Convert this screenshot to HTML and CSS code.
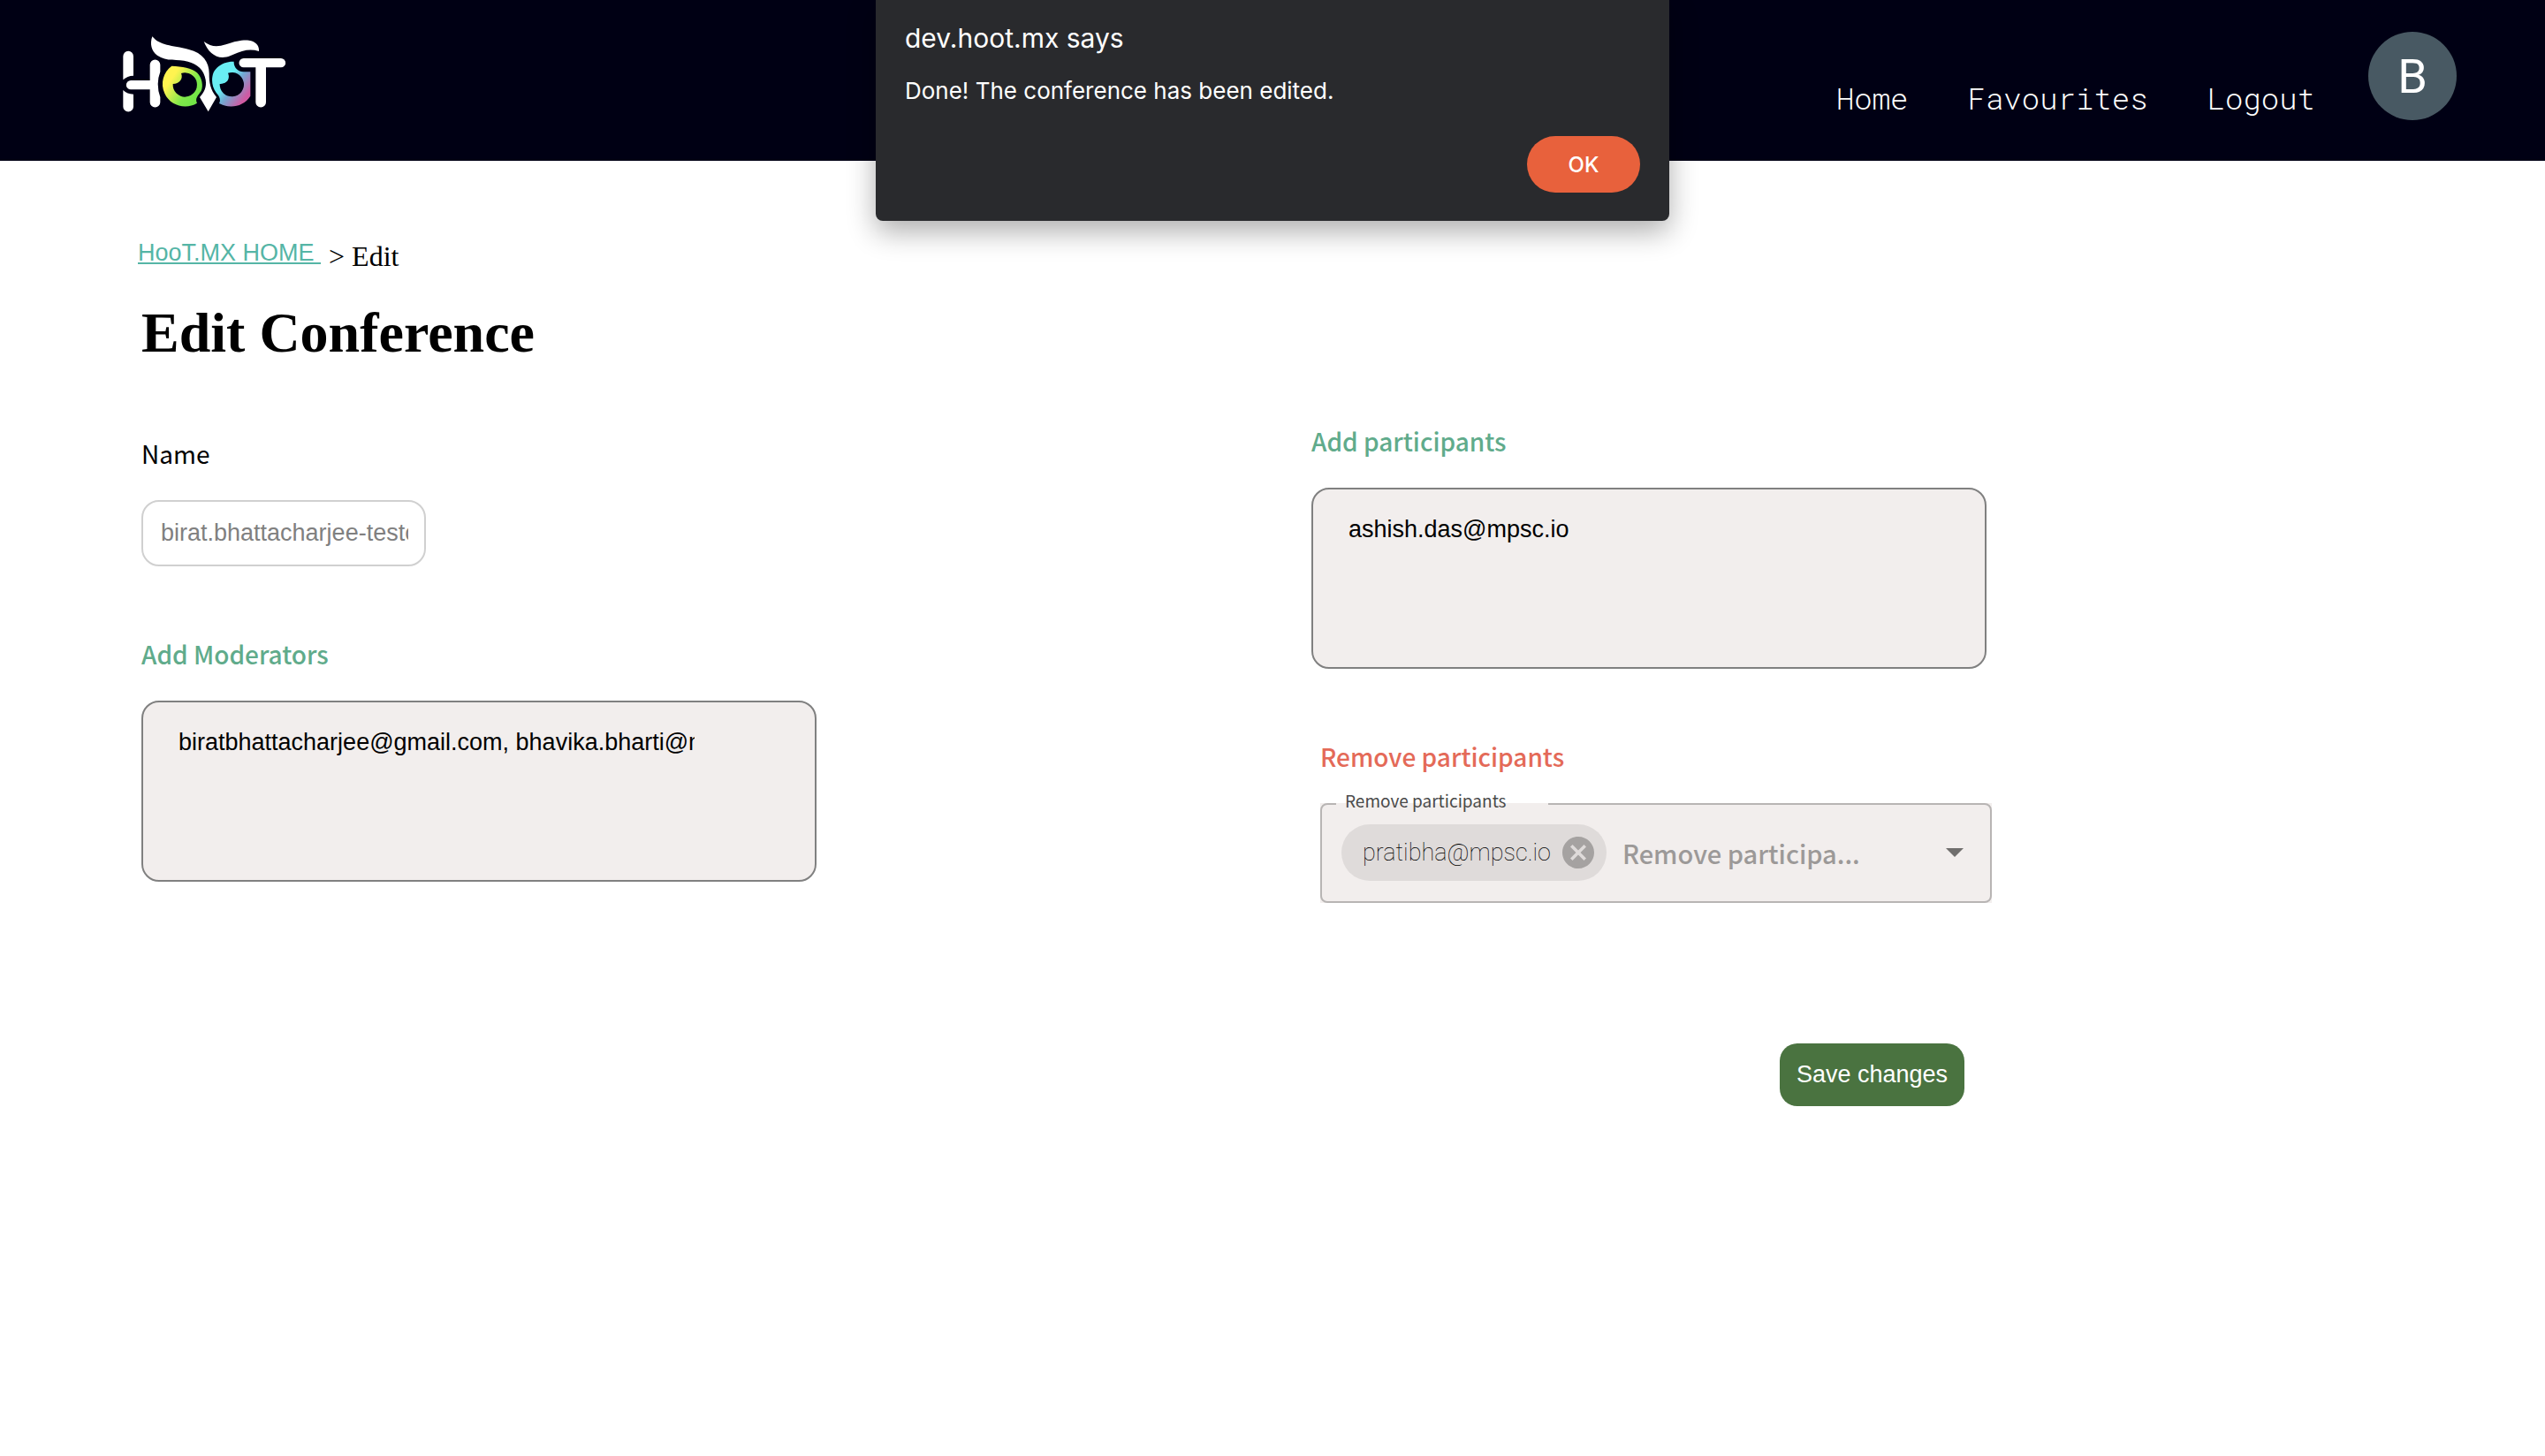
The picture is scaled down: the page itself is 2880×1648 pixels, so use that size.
FILE: index.html
```html
<!DOCTYPE html>
<html lang="en">
<head>
<meta charset="utf-8">
<meta name="viewport" content="width=device-width, initial-scale=1">
<title>Edit Conference</title>
<link rel="stylesheet" href="styles.css">
</head>
<body>
<header class="topbar">
  <a class="logo" href="#" aria-label="HooT home">
    <svg viewBox="57 63 555 258" width="185" height="86" aria-hidden="true">
      <defs>
        <linearGradient id="eye-left" gradientUnits="userSpaceOnUse" x1="205" y1="200" x2="310" y2="270">
          <stop offset="0.15" stop-color="#fff350"/><stop offset="0.7" stop-color="#7de84a"/><stop offset="1" stop-color="#72e547"/>
        </linearGradient>
        <linearGradient id="eye-right" gradientUnits="userSpaceOnUse" x1="385" y1="190" x2="480" y2="262">
          <stop offset="0.3" stop-color="#69edf3"/><stop offset="0.55" stop-color="#71a9d3"/><stop offset="1" stop-color="#cf5aa3"/>
        </linearGradient>
      </defs>
      <g fill="#fff">
        <path d="M58 131a17.500 17.500 0 0 1 35 0V197Q72 197 58 211Z"/>
        <path d="M58 246Q72 260 93 260V302a17.500 17.500 0 0 1-35 0Z"/>
        <path d="M149 160a17.500 17.500 0 0 1 35 0V184Q168 225 184 270V287a17.500 17.500 0 0 1-35 0V244H84a15.500 15.500 0 0 1 0-31H149Z"/>
        <path d="M157 64C183 96 222 93 281 108C329 120 350 151 350 189C350 222 354 244 375 270L347 319L318 270C334 253 342 235 338 211C333 177 309 157 278 149C243 139 206 151 174 128C154 114 148 89 157 64Z"/>
        <path d="M332 81C356 99 376 101 407 91C440 79 464 75 485 77C508 80 521 95 519 114C490 105 464 110 430 126C384 149 349 125 332 81Z"/>
        <path d="M467 138H594a15.500 15.500 0 0 1 0 31H543V287a17.500 17.500 0 0 1-35 0V169H467a15.500 15.500 0 0 1 0-31Z"/>
      </g>
      <path fill="url(#eye-left)" fill-rule="evenodd" d="M223 164C259 166 291 170 309 187C326 204 331 232 323 249C313 264 301 274 309 290C272 313 218 300 199 257C183 222 195 184 223 164ZM255 189C263 207 249 225 227 225A41 41 0 1 0 255 189Z"/>
      <path fill="url(#eye-right)" fill-rule="evenodd" d="M434 149C433 170 449 184 466 184H490V266C467 302 421 311 384 291C391 278 384 266 374 255C358 232 357 207 365 186C377 162 405 148 434 149ZM414 188C423 208 409 226 386 225A41 41 0 1 0 414 188Z"/>
    </svg>
  </a>
  <nav class="nav">
    <a href="#">Home</a>
    <a href="#">Favourites</a>
    <a href="#">Logout</a>
  </nav>
  <div class="avatar">B</div>
</header>

<div class="alert" role="alertdialog" aria-labelledby="alert-title" aria-describedby="alert-text">
  <h2 id="alert-title" class="alert-title">dev.hoot.mx says</h2>
  <p id="alert-text" class="alert-text">Done! The conference has been edited.</p>
  <button type="button" class="alert-ok">OK</button>
</div>

<main class="page">
  <div class="crumbs"><a href="#">HooT.MX HOME&nbsp;</a><span>&gt; Edit</span></div>
  <h1>Edit Conference</h1>
  <form class="columns">
    <div class="column column-main">
      <div class="field">
        <label for="name">Name</label>
        <input id="name" class="name" type="text" value="birat.bhattacharjee-testconf">
      </div>
      <div class="field">
        <label class="add" for="moderators">Add Moderators</label>
        <input id="moderators" class="people" type="text" value="biratbhattacharjee@gmail.com, bhavika.bharti@mpsc.io">
      </div>
    </div>
    <div class="column">
      <div class="field">
        <label class="add" for="participants">Add participants</label>
        <input id="participants" class="people" type="text" value="ashish.das@mpsc.io">
      </div>
      <div class="field removal">
        <label class="remove" for="remove">Remove participants</label>
        <div class="picker">
          <div class="picker-frame">
            <span class="picker-label">Remove participants</span>
            <span class="chip">pratibha@mpsc.io
              <button type="button" class="chip-remove" aria-label="Remove pratibha@mpsc.io">
                <svg viewBox="2 2 20 20" width="36" height="36" aria-hidden="true"><path fill="#a5a2a1" d="M12 2C6.470 2 2 6.470 2 12s4.470 10 10 10 10-4.470 10-10S17.530 2 12 2zm5 13.590L15.590 17 12 13.410 8.410 17 7 15.590 10.590 12 7 8.410 8.410 7 12 10.590 15.590 7 17 8.410 13.410 12 17 15.590z"/></svg>
              </button>
            </span>
            <input id="remove" class="picker-input" type="text" placeholder="Remove participa...">
            <button type="button" class="picker-open" aria-label="Open">
              <svg viewBox="0 0 20 10" width="20" height="10" aria-hidden="true"><path fill="#706e6d" d="M0 0h20L10 10z"/></svg>
            </button>
          </div>
        </div>
      </div>
      <button type="submit" class="save">Save changes</button>
    </div>
  </form>
</main>
</body>
</html>
```
FILE: styles.css
```css
* {
  box-sizing: border-box;
}

body {
  margin: 0;
  background: #fff;
  color: #000;
  font-family: "Liberation Sans", Arial, sans-serif;
  font-size: 27px;
}

button,
input {
  font: inherit;
}

button {
  border: 0;
  padding: 0;
  cursor: pointer;
}

/* Top bar */
.topbar {
  display: flex;
  align-items: flex-start;
  height: 182px;
  padding: 36px 100px 0 139px;
  background: #000014;
}

.logo {
  margin-top: 5px;
}

.logo svg {
  display: block;
}

.nav {
  display: flex;
  gap: 67px;
  margin: 55px 60px 0 auto;
  font: 300 34px/40px "Roboto Mono", "Liberation Mono", monospace;
}

.nav a {
  color: #fff;
  text-decoration: none;
}

.avatar {
  width: 100px;
  height: 100px;
  border-radius: 50%;
  background: #485963;
  color: #fff;
  font: 400 54px/102px Roboto, sans-serif;
  text-align: center;
}

/* Browser alert, drawn over the page */
.alert {
  position: absolute;
  top: 0;
  left: 0;
  right: 0;
  display: flex;
  flex-direction: column;
  width: 898px;
  margin: 0 auto;
  padding: 24px 33px 32px;
  border-radius: 0 0 8px 8px;
  background: #292a2d;
  box-shadow: 0 12px 32px rgba(0, 0, 0, 0.32);
  color: #fff;
  font-family: Inter, sans-serif;
}

.alert-title {
  margin: 0;
  font-size: 30px;
  font-weight: 400;
  line-height: 38px;
}

.alert-text {
  margin: 22px 0 32px;
  font-size: 26px;
  line-height: 38px;
}

.alert-ok {
  align-self: flex-end;
  width: 128px;
  height: 64px;
  border-radius: 32px;
  background: #e8613c;
  color: #fff;
  font-size: 24px;
  font-weight: 500;
}

/* Page */
.page {
  padding: 86px 72px 0 160px;
}

.crumbs {
  display: flex;
  align-items: flex-start;
  gap: 9px;
  margin-left: -4px;
  line-height: 36px;
}

.crumbs a {
  color: #55b5a6;
}

.crumbs span {
  font: 32px/44px "Liberation Serif", serif;
}

h1 {
  margin: 28px 0 0;
  font: 700 64px/74px "Liberation Serif", serif;
}

.columns {
  display: grid;
  grid-template-columns: 1fr 1fr;
  margin-top: 66px;
}

.column {
  display: flex;
  flex-direction: column;
  gap: 80px;
}

.column-main {
  padding-top: 14px;
}

.field {
  display: flex;
  flex-direction: column;
  align-items: flex-start;
}

label {
  font: 400 28px/38px "Noto Sans CJK SC", "Noto Sans", sans-serif;
  margin-bottom: 34px;
}

.add {
  color: #60ab8b;
  font-weight: 500;
}

.remove {
  color: #e46a58;
  font-weight: 500;
}

.name {
  width: 322px;
  height: 75px;
  padding: 0 18px 0 20px;
  border: 2px solid #d0d0d0;
  border-radius: 20px;
  background: #fff;
  color: #808080;
}

.people {
  width: 764px;
  max-width: 100%;
  height: 205px;
  padding: 0 136px 110px 40px;
  border: 2px solid #808080;
  border-radius: 20px;
  background: #f2eeed;
  color: #000;
}

/* Picker with a chip and a notched label */
.removal {
  margin-left: 10px;
}

.picker {
  width: 760px;
  max-width: 100%;
  background: #f2eeed;
}

.picker-frame {
  position: relative;
  display: flex;
  align-items: center;
  height: 113px;
  padding: 0 30px 2px 22px;
  border: 2px solid #b8b5b4;
  border-radius: 8px;
}

.picker-frame::before {
  content: "";
  position: absolute;
  top: -2px;
  left: 16px;
  width: 240px;
  height: 2px;
  background: #f2eeed;
}

.picker-label {
  position: absolute;
  top: -19px;
  left: 26px;
  color: #4a4a4a;
  font: 400 19px/28px "Noto Sans CJK SC", "Noto Sans", sans-serif;
}

.chip {
  display: flex;
  align-items: center;
  justify-content: space-between;
  width: 300px;
  height: 64px;
  padding: 0 14px 0 24px;
  border-radius: 32px;
  background: #dfdbda;
  color: #000;
  font: 100 27px/36px Roboto, sans-serif;
}

.chip-remove,
.picker-open {
  display: flex;
  background: none;
}

.picker-input {
  flex: 0 1 300px;
  min-width: 0;
  margin: 0 auto 0 18px;
  padding: 0;
  border: 0;
  background: none;
  font: 500 29px/38px "Noto Sans CJK SC", "Noto Sans", sans-serif;
}

.picker-input::placeholder {
  color: #9c9998;
  opacity: 1;
}

.save {
  width: 209px;
  height: 71px;
  margin: 79px 0 0 530px;
  border-radius: 20px;
  background: #4a7340;
  color: #fff;
}
```
